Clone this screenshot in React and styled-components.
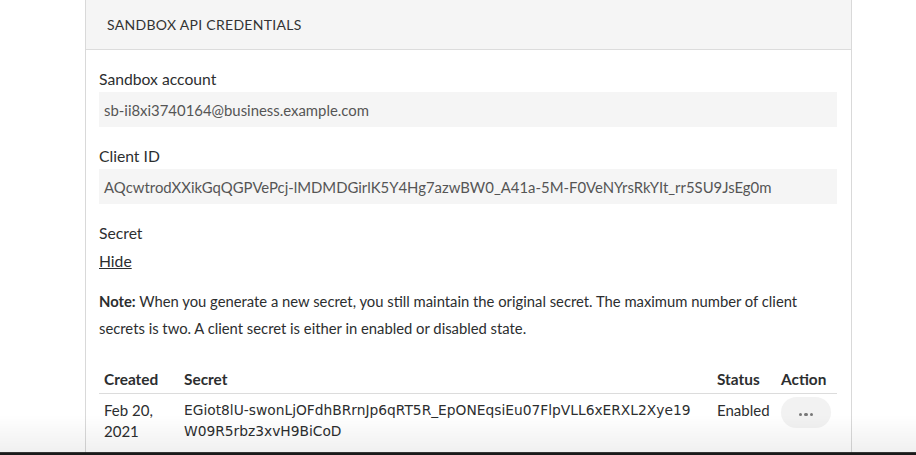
import React from 'react';
import styled, {createGlobalStyle} from 'styled-components';

var GlobalStyle = createGlobalStyle`
  html, body {
    margin: 0;
    padding: 0;
    background: #ffffff;
  }
  body {
    font-family: "Lato", "Noto Sans", sans-serif;
    color: #2c2e2f;
  }
`;

var secrets = [
  {
    created: 'Feb 20, 2021',
    secret: 'EGiot8lU-swonLjOFdhBRrnJp6qRT5R_EpONEqsiEu07FlpVLL6xERXL2Xye19W09R5rbz3xvH9BiCoD',
    status: 'Enabled',
  },
];

var Field = ({label, value}) => (
  <FieldBlock>
    <Label>{label}</Label>
    <ValueBox>{value}</ValueBox>
  </FieldBlock>
);

var App = () => {
  return (
    <Page>
      <GlobalStyle />
      <Card>
        <CardHeader>Sandbox API credentials</CardHeader>
        <CardBody>
          <Field label="Sandbox account" value="sb-ii8xi3740164@business.example.com" />
          <Field
            label="Client ID"
            value="AQcwtrodXXikGqQGPVePcj-lMDMDGirlK5Y4Hg7azwBW0_A41a-5M-F0VeNYrsRkYIt_rr5SU9JsEg0m"
          />
          <FieldBlock gap="16px">
            <Label>Secret</Label>
            <HideLink href="#">Hide</HideLink>
          </FieldBlock>
          <Note>
            <strong>Note:</strong> When you generate a new secret, you still maintain the original
            secret. The maximum number of client secrets is two. A client secret is either in
            enabled or disabled state.
          </Note>
          <Table>
            <colgroup>
              <col style={{width: '80px'}} />
              <col />
              <col style={{width: '64px'}} />
              <col style={{width: '61px'}} />
            </colgroup>
            <thead>
              <tr>
                <Th>Created</Th>
                <Th>Secret</Th>
                <Th>Status</Th>
                <Th>Action</Th>
              </tr>
            </thead>
            <tbody>
              {secrets.map((s) => (
                <tr key={s.secret}>
                  <Td>{s.created}</Td>
                  <SecretTd>{s.secret}</SecretTd>
                  <Td>{s.status}</Td>
                  <Td>
                    <MoreButton aria-label="More actions">
                      <Dot />
                      <Dot />
                      <Dot />
                    </MoreButton>
                  </Td>
                </tr>
              ))}
            </tbody>
          </Table>
        </CardBody>
      </Card>
      <BottomFade />
    </Page>
  );
};

// styled components
var Page = styled.div`
  padding-left: 85px;
  width: 767px;
  height: 455px;
  overflow: hidden;
`;

var Card = styled.section`
  border-left: 1px solid #d9d9d9;
  border-right: 1px solid #d9d9d9;
  min-height: 455px;
  box-sizing: border-box;
`;

var CardHeader = styled.div`
  background: #f5f5f5;
  border-bottom: 1px solid #dcdcdc;
  height: 50px;
  box-sizing: border-box;
  display: flex;
  align-items: center;
  padding-left: 21px;
  font-size: 14px;
  letter-spacing: 0.3px;
  text-transform: uppercase;
  color: #333;
`;

var CardBody = styled.div`
  padding: 18px 14px 0 13px;
`;

var FieldBlock = styled.div`
  margin-bottom: ${(p) => p.gap || '18px'};
`;

var Label = styled.div`
  font-size: 15.7px;
  line-height: 22px;
  color: #2c2e2f;
  margin-bottom: 2px;
`;

var ValueBox = styled.div`
  background: #f5f5f5;
  height: 35px;
  display: flex;
  align-items: center;
  padding-left: 5px;
  font-size: 14.9px;
  color: #555;
  white-space: nowrap;
  overflow: hidden;
`;

var HideLink = styled.a`
  display: inline-block;
  margin-top: 4px;
  font-size: 15.7px;
  line-height: 22px;
  color: #2c2e2f;
  text-decoration: underline;
`;

var Note = styled.p`
  margin: 0 0 24px;
  font-size: 14.8px;
  line-height: 27px;
  color: #2c2e2f;

  strong {
    font-weight: 700;
  }
`;

var Table = styled.table`
  width: 100%;
  border-collapse: collapse;
  table-layout: fixed;
`;

var Th = styled.th`
  text-align: left;
  font-size: 15.4px;
  font-weight: 700;
  line-height: 20px;
  padding: 3px 5px 4px;
  border-bottom: 1px solid #dcdcdc;
  white-space: nowrap;
`;

var Td = styled.td`
  vertical-align: top;
  font-size: 15px;
  line-height: 21px;
  padding: 6px 5px;
`;

var SecretTd = styled(Td)`
  font-family: "DejaVu Sans", sans-serif;
  font-size: 13.8px;
  word-break: break-all;
  padding-right: 14px;
`;

var MoreButton = styled.button`
  width: 50px;
  height: 31px;
  margin-top: -3px;
  border: none;
  border-radius: 16px;
  background: #f2f2f2;
  display: flex;
  align-items: center;
  justify-content: center;
  gap: 2px;
  padding: 4px 0 0;
  cursor: pointer;
`;

var Dot = styled.span`
  width: 3.5px;
  height: 3.5px;
  border-radius: 50%;
  background: #777;
`;

var BottomFade = styled.div`
  position: fixed;
  left: 0;
  right: 0;
  bottom: 0;
  height: 40px;
  background: linear-gradient(to bottom, rgba(0, 0, 0, 0) 0%, rgba(0, 0, 0, 0.06) 92%, #1a1a1a 94%, #1a1a1a 100%);
  pointer-events: none;
`;

export default App;
